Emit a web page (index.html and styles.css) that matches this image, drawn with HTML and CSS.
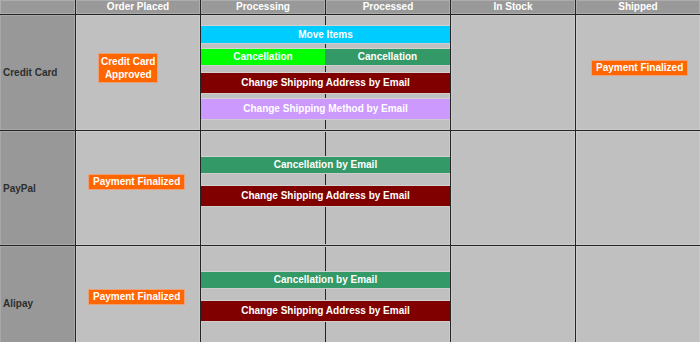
FILE: index.html
```html
<!DOCTYPE html>
<html lang="en">
<head>
<meta charset="utf-8">
<title>Order Workflow</title>
<link rel="stylesheet" href="styles.css">
</head>
<body>
<div class="board">
  <div class="head"></div>
  <div class="head">Order Placed</div>
  <div class="head">Processing</div>
  <div class="head">Processed</div>
  <div class="head">In Stock</div>
  <div class="head">Shipped</div>

  <div class="label">Credit Card</div>
  <div class="cell cell-cc-order"><div class="tag tag-two">Credit Card<br>Approved</div></div>
  <div class="cell span span-cc">
    <div class="bar bar-blue h17">Move Items</div>
    <div class="pair g6">
      <div class="bar bar-green h16 half-left">Cancellation</div>
      <div class="bar bar-teal h16 half-right">Cancellation</div>
    </div>
    <div class="bar bar-maroon h20 g8">Change Shipping Address by Email</div>
    <div class="bar bar-lavender h20 g6">Change Shipping Method by Email</div>
  </div>
  <div class="cell"></div>
  <div class="cell cell-cc-ship"><div class="tag">Payment Finalized</div></div>

  <div class="label">PayPal</div>
  <div class="cell cell-order"><div class="tag">Payment Finalized</div></div>
  <div class="cell span span-pay">
    <div class="bar bar-teal h16">Cancellation by Email</div>
    <div class="bar bar-maroon h20 g13">Change Shipping Address by Email</div>
  </div>
  <div class="cell"></div>
  <div class="cell"></div>

  <div class="label">Alipay</div>
  <div class="cell cell-order"><div class="tag">Payment Finalized</div></div>
  <div class="cell span span-pay">
    <div class="bar bar-teal h16">Cancellation by Email</div>
    <div class="bar bar-maroon h20 g13">Change Shipping Address by Email</div>
  </div>
  <div class="cell"></div>
  <div class="cell"></div>
</div>
</body>
</html>
```

FILE: styles.css
```css
html, body {
  margin: 0;
  padding: 0;
  background: #c0c0c0;
}

body {
  font-family: "Liberation Sans", Arial, sans-serif;
  font-size: 10px;
  font-weight: bold;
}

.board {
  display: grid;
  grid-template-columns: 75px repeat(5, 124px);
  grid-template-rows: 14px 115px 114px 114px;
  gap: 1px;
  background: #242424;
  width: 700px;
}

.head {
  background: #999999;
  color: #ffffff;
  text-align: center;
  line-height: 14px;
  box-shadow: inset 0 0 0 1px #adadad;
}

.label {
  background: #989898;
  color: #2e2e2e;
  display: flex;
  align-items: center;
  padding-left: 3px;
  box-shadow: inset 0 0 0 1px #a8a8a8;
}

.cell {
  background: #c0c0c0;
  box-shadow: inset 0 0 0 1px #cacaca;
  display: flex;
  flex-direction: column;
  align-items: flex-start;
}

.span {
  grid-column: span 2;
  background: linear-gradient(to right, #c0c0c0 124px, #242424 124px, #242424 125px, #c0c0c0 125px);
  align-items: stretch;
}

.span-cc { padding-top: 11px; }
.span-pay { padding-top: 26px; }

.cell-cc-order { padding: 38px 0 0 22px; }
.cell-cc-ship { padding: 45px 0 0 15px; }
.cell-order { padding: 43px 0 0 12px; }

.tag {
  background: #ff6600;
  color: #ffffff;
  border: 1px solid #eba27a;
  padding: 0 4px;
  line-height: 14px;
  white-space: nowrap;
}

.tag-two {
  text-align: center;
  line-height: 13px;
  padding: 1px 2px;
}

.bar {
  color: #ffffff;
  text-align: center;
  white-space: nowrap;
  box-shadow: 0 -1px 0 #d2d2d2, 0 1px 0 #cdcdcd;
}

.pair {
  display: flex;
}

.half-left { width: 124px; }
.half-right { flex: 1; }

.h16 { height: 16px; line-height: 16px; }
.h17 { height: 17px; line-height: 17px; }
.h20 { height: 20px; line-height: 20px; }

.g6 { margin-top: 6px; }
.g8 { margin-top: 8px; }
.g13 { margin-top: 13px; }

.bar-blue { background: #00ccff; }
.bar-green { background: #00ff00; }
.bar-teal { background: #339966; }
.bar-maroon { background: #800000; }
.bar-lavender { background: #cc99ff; }
```
